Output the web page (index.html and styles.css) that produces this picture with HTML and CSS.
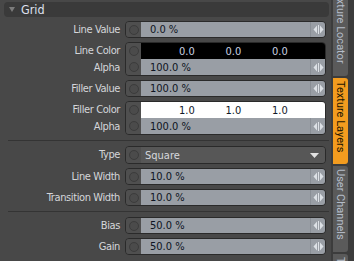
FILE: index.html
```html
<!DOCTYPE html>
<html>
<head>
<meta charset="utf-8">
<link rel="stylesheet" href="styles.css">
</head>
<body>
<div class="app">
  <div class="panel">
    <div class="header"><span class="tri"></span><span class="title">Grid</span></div>

    <div class="group">
      <div class="labels"><div class="lab">Line Value</div></div>
      <div class="box">
        <div class="line">
          <span class="dot"><i></i></span>
          <span class="field">0.0 %</span>
          <span class="arr"><svg width="11" height="9" viewBox="0 0 11 9"><path d="M4 0.5 L0.5 4.5 L4 8.5Z M7 0.5 L10.5 4.5 L7 8.5Z" fill="#dde1e6"/><rect x="5" y="0" width="1" height="9" fill="#dde1e6"/></svg></span>
        </div>
      </div>
    </div>

    <div class="group">
      <div class="labels two"><div class="lab">Line Color</div><div class="lab">Alpha</div></div>
      <div class="box two">
        <div class="line">
          <span class="dot"><i></i></span>
          <span class="field color black"><b>0.0</b><b>0.0</b><b>0.0</b></span>
        </div>
        <div class="line">
          <span class="dot"><i></i></span>
          <span class="field">100.0 %</span>
          <span class="arr"><svg width="11" height="9" viewBox="0 0 11 9"><path d="M4 0.5 L0.5 4.5 L4 8.5Z M7 0.5 L10.5 4.5 L7 8.5Z" fill="#dde1e6"/><rect x="5" y="0" width="1" height="9" fill="#dde1e6"/></svg></span>
        </div>
      </div>
    </div>

    <div class="group">
      <div class="labels"><div class="lab">Filler Value</div></div>
      <div class="box">
        <div class="line">
          <span class="dot"><i></i></span>
          <span class="field">100.0 %</span>
          <span class="arr"><svg width="11" height="9" viewBox="0 0 11 9"><path d="M4 0.5 L0.5 4.5 L4 8.5Z M7 0.5 L10.5 4.5 L7 8.5Z" fill="#dde1e6"/><rect x="5" y="0" width="1" height="9" fill="#dde1e6"/></svg></span>
        </div>
      </div>
    </div>

    <div class="group">
      <div class="labels two"><div class="lab">Filler Color</div><div class="lab">Alpha</div></div>
      <div class="box two">
        <div class="line">
          <span class="dot"><i></i></span>
          <span class="field color white"><b>1.0</b><b>1.0</b><b>1.0</b></span>
        </div>
        <div class="line">
          <span class="dot"><i></i></span>
          <span class="field">100.0 %</span>
          <span class="arr"><svg width="11" height="9" viewBox="0 0 11 9"><path d="M4 0.5 L0.5 4.5 L4 8.5Z M7 0.5 L10.5 4.5 L7 8.5Z" fill="#dde1e6"/><rect x="5" y="0" width="1" height="9" fill="#dde1e6"/></svg></span>
        </div>
      </div>
    </div>

    <div class="sep"></div>

    <div class="group">
      <div class="labels"><div class="lab tall">Type</div></div>
      <div class="box">
        <div class="line tall">
          <span class="dot"><i></i></span>
          <span class="field drop">Square<svg class="caret" width="9" height="5" viewBox="0 0 9 5"><path d="M0 0 H9 L4.5 5Z" fill="#e2e2e2"/></svg></span>
        </div>
      </div>
    </div>

    <div class="group">
      <div class="labels"><div class="lab">Line Width</div></div>
      <div class="box">
        <div class="line">
          <span class="dot"><i></i></span>
          <span class="field">10.0 %</span>
          <span class="arr"><svg width="11" height="9" viewBox="0 0 11 9"><path d="M4 0.5 L0.5 4.5 L4 8.5Z M7 0.5 L10.5 4.5 L7 8.5Z" fill="#dde1e6"/><rect x="5" y="0" width="1" height="9" fill="#dde1e6"/></svg></span>
        </div>
      </div>
    </div>

    <div class="group">
      <div class="labels"><div class="lab">Transition Width</div></div>
      <div class="box">
        <div class="line">
          <span class="dot"><i></i></span>
          <span class="field">10.0 %</span>
          <span class="arr"><svg width="11" height="9" viewBox="0 0 11 9"><path d="M4 0.5 L0.5 4.5 L4 8.5Z M7 0.5 L10.5 4.5 L7 8.5Z" fill="#dde1e6"/><rect x="5" y="0" width="1" height="9" fill="#dde1e6"/></svg></span>
        </div>
      </div>
    </div>

    <div class="sep"></div>

    <div class="group">
      <div class="labels"><div class="lab">Bias</div></div>
      <div class="box">
        <div class="line">
          <span class="dot"><i></i></span>
          <span class="field">50.0 %</span>
          <span class="arr"><svg width="11" height="9" viewBox="0 0 11 9"><path d="M4 0.5 L0.5 4.5 L4 8.5Z M7 0.5 L10.5 4.5 L7 8.5Z" fill="#dde1e6"/><rect x="5" y="0" width="1" height="9" fill="#dde1e6"/></svg></span>
        </div>
      </div>
    </div>

    <div class="group">
      <div class="labels"><div class="lab">Gain</div></div>
      <div class="box">
        <div class="line">
          <span class="dot"><i></i></span>
          <span class="field">50.0 %</span>
          <span class="arr"><svg width="11" height="9" viewBox="0 0 11 9"><path d="M4 0.5 L0.5 4.5 L4 8.5Z M7 0.5 L10.5 4.5 L7 8.5Z" fill="#dde1e6"/><rect x="5" y="0" width="1" height="9" fill="#dde1e6"/></svg></span>
        </div>
      </div>
    </div>
  </div>

  <div class="tabs">
    <div class="tab">Texture Locator</div>
    <div class="tab active">Texture Layers</div>
    <div class="tab">User Channels</div>
    <div class="tab">Tags</div>
  </div>
</div>
</body>
</html>
```

FILE: styles.css
```css
html, body {
  margin: 0;
  padding: 0;
  width: 354px;
  height: 261px;
  overflow: hidden;
  background: #484848;
  font-family: "DejaVu Sans Condensed", Roboto, sans-serif;
  font-size: 11px;
}

.app {
  display: flex;
  width: 354px;
  height: 261px;
  overflow: hidden;
}

.panel {
  width: 333px;
  padding-top: 2px;
  display: flex;
  flex-direction: column;
}

.header {
  height: 15px;
  margin: 0 2px 0 4px;
  background: #3a3a3a;
  border-radius: 4px;
  display: flex;
  align-items: center;
  color: #dde0ee;
  font-size: 12.5px;
}

.tri {
  width: 0;
  height: 0;
  margin: 0 6px 0 5px;
  border-left: 3px solid transparent;
  border-right: 3px solid transparent;
  border-top: 5px solid #7c7c7c;
}

.group {
  display: flex;
  margin-top: 4px;
  margin-right: 5px;
}

.sep + .group { margin-top: 0; }

.labels {
  width: 120px;
  margin-right: 5px;
  display: flex;
  flex-direction: column;
  color: #d4d6da;
  text-align: right;
  letter-spacing: -0.4px;
}

.lab {
  height: 17px;
  line-height: 17px;
  white-space: nowrap;
}

.lab.tall { height: 18px; line-height: 18px; }

.box {
  flex: 1;
  border: 1px solid #2a2a2a;
  border-radius: 4px;
  overflow: hidden;
  display: flex;
  flex-direction: column;
}

.line {
  height: 15px;
  display: flex;
}
.box.two .line { height: 16px; }
.line.tall { height: 16px; }

.dot {
  width: 15px;
  background: #4f4f4f;
  display: flex;
  align-items: center;
  justify-content: center;
}
.dot i {
  width: 8px;
  height: 8px;
  border: 1px solid #3c3c3c;
  border-radius: 50%;
  background: #4b4b4b;
}

.field {
  flex: 1;
  background: #999ea5;
  color: #0e1422;
  padding-left: 9px;
  line-height: 15px;
  display: flex;
  align-items: center;
}

.field.color { padding-left: 38px; }
.field.color b {
  font-weight: normal;
  width: 46.5px;
}
.field.black { background: #000; color: #c8d0e0; }
.field.white { background: #fff; color: #101828; }

.field.drop {
  background: #575757;
  color: #d6d8dc;
  padding-left: 4px;
  justify-content: space-between;
  padding-right: 6px;
}

.arr {
  width: 14px;
  background: #999ea5;
  border-left: 1px solid #8a8f96;
  display: flex;
  align-items: center;
  justify-content: center;
}

.sep {
  height: 1px;
  margin: 5px 2px 5px 8px;
  background: #343434;
}

.tabs {
  width: 21px;
  flex: none;
  background: #3c3c3c;
  padding-left: 2px;
  display: flex;
  flex-direction: column;
  gap: 2px;
  margin-top: -16px;
  overflow: hidden;
}

.tab {
  flex: none;
  width: 15px;
  writing-mode: vertical-rl;
  background: #5a5a5a;
  color: #b4bcc8;
  padding: 3px 0 12px 0;
  line-height: 15px;
  font-family: Roboto, sans-serif;
  font-size: 11px;
  text-align: left;
  white-space: nowrap;
  border-radius: 0 3px 3px 0;
}

.tab.active {
  background: #f39c1f;
  color: #241600;
}
```
